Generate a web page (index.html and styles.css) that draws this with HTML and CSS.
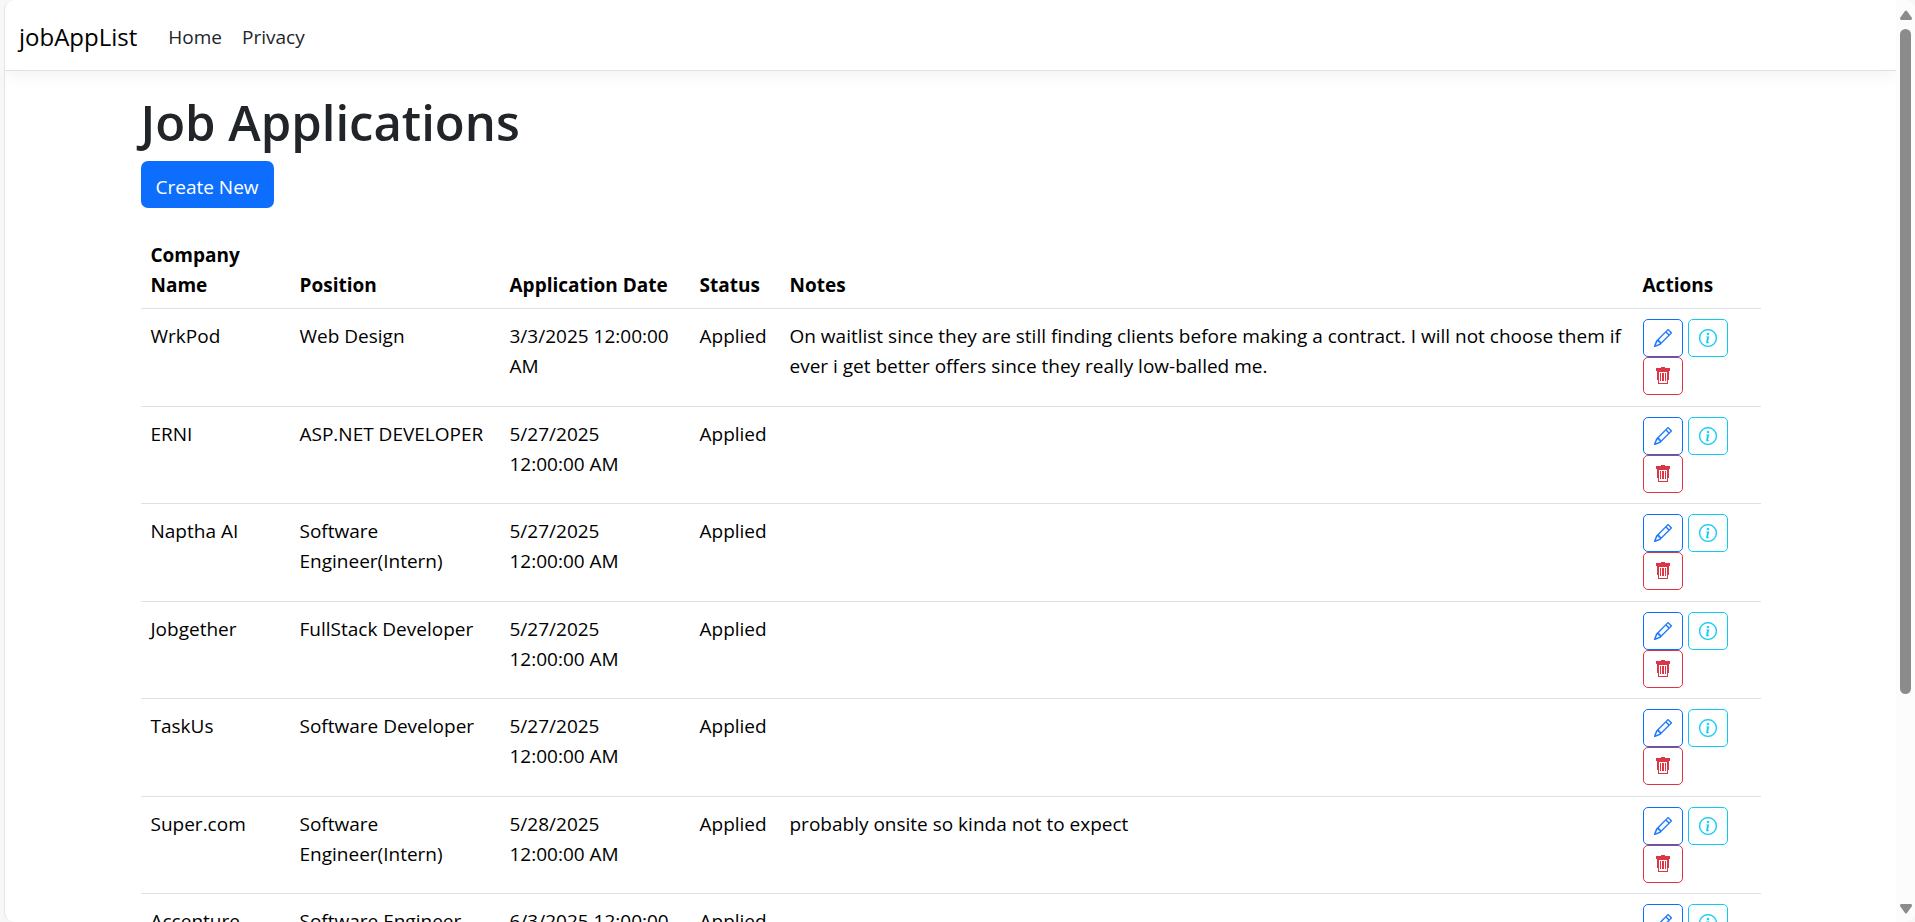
FILE: index.html
```
<!DOCTYPE html>
<html lang="en">
<head>
<meta charset="utf-8">
<title>Job Applications - jobAppList</title>
<link rel="stylesheet" href="styles.css">
</head>
<body>
<svg class="sprite" aria-hidden="true">
  <symbol id="pencil" viewBox="0 0 16 16"><path d="M12.146.146a.5.5 0 0 1 .708 0l3 3a.5.5 0 0 1 0 .708l-10 10a.5.5 0 0 1-.168.11l-5 2a.5.5 0 0 1-.65-.65l2-5a.5.5 0 0 1 .11-.168zM11.207 2.5 13.5 4.793 14.793 3.5 12.5 1.207zm1.586 3L10.5 3.207 4 9.707V10h.5a.5.5 0 0 1 .5.5v.5h.5a.5.5 0 0 1 .5.5v.5h.293zm-9.761 5.175-.106.106-1.528 3.821 3.821-1.528.106-.106A.5.5 0 0 1 5 12.5V12h-.5a.5.5 0 0 1-.5-.5V11h-.5a.5.5 0 0 1-.468-.325"/></symbol>
  <symbol id="info" viewBox="0 0 16 16"><path d="M8 15A7 7 0 1 1 8 1a7 7 0 0 1 0 14m0 1A8 8 0 1 0 8 0a8 8 0 0 0 0 16"/><path d="m8.93 6.588-2.29.287-.082.38.45.083c.294.07.352.176.288.469l-.738 3.468c-.194.897.105 1.319.808 1.319.545 0 1.178-.252 1.465-.598l.088-.416c-.2.176-.492.246-.686.246-.275 0-.375-.193-.304-.533zM9 4.5a1 1 0 1 1-2 0 1 1 0 0 1 2 0"/></symbol>
  <symbol id="trash" viewBox="0 0 18 18"><path fill-rule="evenodd" d="M7 0h4v1h5v3h-1v9h-1v4H4v-4H3V4H2V1h5zM5 5v11h8V5zM6 6h1v8H6zM8 6h2v8H8zM11 6h1v8h-1z"/></symbol>
</svg>
<div class="window">
  <div class="page">
    <header class="navbar">
      <a class="brand" href="#">jobAppList</a>
      <nav class="links"><a href="#">Home</a><a href="#">Privacy</a></nav>
    </header>
    <main class="container">
      <h1>Job Applications</h1>
      <a class="create" href="#">Create New</a>
      <table>
        <colgroup><col class="c-company"><col class="c-position"><col class="c-date"><col class="c-status"><col><col class="c-actions"></colgroup>
        <thead><tr><th>Company Name</th><th>Position</th><th>Application Date</th><th>Status</th><th>Notes</th><th>Actions</th></tr></thead>
        <tbody id="rows"></tbody>
      </table>
    </main>
  </div>
  <div class="scrollbar" aria-hidden="true">
    <svg class="arrow" viewBox="0 0 12 10"><path d="M5 1Q6 0 7 1L12 8Q12 10 11 10H1Q0 10 0 8Z"/></svg>
    <div class="thumb"></div>
    <div class="rest"></div>
    <svg class="arrow" viewBox="0 0 12 10"><path d="M5 9Q6 10 7 9L12 2Q12 0 11 0H1Q0 0 0 2Z"/></svg>
  </div>
</div>
<script src="app.js"></script>
</body>
</html>
```
FILE: styles.css
```
* { box-sizing: border-box; }
body {
  margin: 0;
  background: #f7f7f8;
  color: #212529;
  font: 19px/30px "Open Sans", "Noto Sans", sans-serif;
}
a { color: inherit; text-decoration: none; }
.sprite { position: absolute; width: 0; height: 0; }
.window {
  display: flex;
  height: 100vh;
  margin-left: 4px;
  overflow: hidden;
  background: #fff;
  border-left: 1px solid #e4e4e6;
  border-radius: 10px;
}
.page { flex: 1; min-width: 0; overflow: hidden; }
.navbar {
  display: flex;
  align-items: center;
  gap: 31px;
  height: 71px;
  padding: 3px 14px 0;
  border-bottom: 1px solid #dee2e6;
  box-shadow: 0 5px 15px rgba(0, 0, 0, .05);
}
.brand { color: #000; font-size: 24px; }
.links { display: flex; gap: 20px; }
.container { max-width: 1620px; margin: 21px auto 0; }
h1 { margin: 0 0 9px; font-size: 49px; line-height: 60px; font-weight: 600; }
.create {
  display: inline-block;
  padding: 11px 15px 6px;
  border-radius: 7px;
  background: #0d6efd;
  color: #fff;
}
table {
  width: 100%;
  margin-top: 20px;
  border-collapse: collapse;
  table-layout: fixed;
  color: #000;
}
.c-company { width: 149px; }
.c-position { width: 210px; }
.c-date { width: 190px; }
.c-status { width: 90px; }
.c-actions { width: 128px; }
th, td {
  padding: 12px 10px 8px;
  border-bottom: 1px solid #dee2e6;
  text-align: left;
  vertical-align: top;
}
th { vertical-align: bottom; font-weight: 700; }
th:nth-child(3) { padding-right: 0; }
tbody tr { height: 97px; }
tbody tr:nth-child(odd) { height: 98px; }
td.actions { padding: 10px 0 0 10px; }
.buttons { display: flex; flex-wrap: wrap; gap: 0 5px; }
.icon {
  display: flex;
  align-items: center;
  justify-content: center;
  width: 40px;
  height: 38px;
  border: 1px solid;
  border-radius: 5px;
}
.icon svg { width: 18px; height: 18px; fill: currentColor; }
.edit { color: #0d6efd; }
.details { color: #0dcaf0; }
.edit svg, .details svg { stroke: currentColor; stroke-width: .25px; overflow: visible; }
.delete { color: #dc3545; }
.scrollbar {
  display: flex;
  flex-direction: column;
  align-items: center;
  width: 19px;
  padding: 10px 0 8px;
  background: #fcfcfc;
}
.arrow { width: 12px; height: 10px; fill: #8b8b8b; }
.thumb { flex: 19; width: 11px; margin-top: 9px; border-radius: 6px; background: #8b8b8b; }
.rest { flex: 6; }
```
FILE: app.js
```
const applications = [
  ["WrkPod", "Web Design", "3/3/2025 12:00:00 AM", "Applied", "On waitlist since they are still finding clients before making a contract. I will not choose them if ever i get better offers since they really low-balled me."],
  ["ERNI", "ASP.NET DEVELOPER", "5/27/2025 12:00:00 AM", "Applied", ""],
  ["Naptha AI", "Software Engineer(Intern)", "5/27/2025 12:00:00 AM", "Applied", ""],
  ["Jobgether", "FullStack Developer", "5/27/2025 12:00:00 AM", "Applied", ""],
  ["TaskUs", "Software Developer", "5/27/2025 12:00:00 AM", "Applied", ""],
  ["Super.com", "Software Engineer(Intern)", "5/28/2025 12:00:00 AM", "Applied", "probably onsite so kinda not to expect"],
  ["Accenture", "Software Engineer", "6/3/2025 12:00:00 AM", "Applied", ""]
];
const icon = (kind, label, glyph) =>
  `<a class="icon ${kind}" href="#" aria-label="${label}"><svg><use href="#${glyph}"/></svg></a>`;
const actions = `<td class="actions"><div class="buttons">${icon("edit", "Edit", "pencil")}${icon("details", "Details", "info")}${icon("delete", "Delete", "trash")}</div></td>`;
document.getElementById("rows").innerHTML = applications
  .map(row => `<tr>${row.map(cell => `<td>${cell}</td>`).join("")}${actions}</tr>`)
  .join("");
```
